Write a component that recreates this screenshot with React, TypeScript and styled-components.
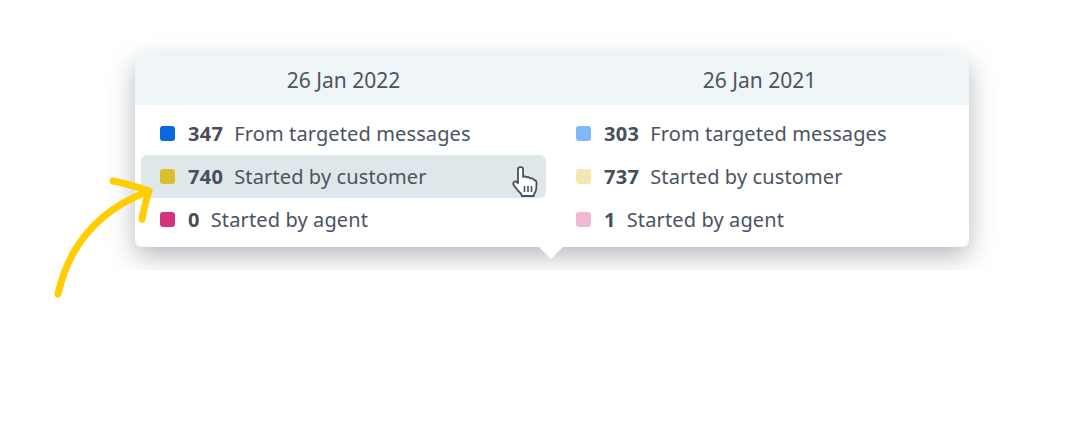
import React from "react";
import styled, { createGlobalStyle } from "styled-components";

const Global = createGlobalStyle`
  html, body { margin: 0; padding: 0; background: #fff; }
  body { font-family: "Noto Sans", "Open Sans", sans-serif; }
`;

const Page = styled.div`
  position: relative;
  width: 1088px;
  height: 423px;
  overflow: hidden;
  background: #fff;
`;

const ShadowClip = styled.div`
  height: 270px;
  padding: 55px 0 0 135px;
  box-sizing: border-box;
  overflow: hidden;
`;

const Card = styled.div`
  position: relative;
  width: 834px;
  height: 192px;
  background: #fff;
  border-radius: 7px;
  box-shadow: 0 9px 26px rgba(60, 72, 84, 0.38);
`;

const HeaderRow = styled.div`
  display: grid;
  grid-template-columns: 405px 405px;
  column-gap: 11px;
  padding: 0 6px;
  height: 50px;
  align-items: center;
  background: #f0f5f7;
  border-radius: 7px 7px 0 0;
`;

const DateLabel = styled.div`
  text-align: center;
  font-size: 21px;
  color: #4a545f;
`;

const Body = styled.div`
  display: grid;
  grid-template-columns: 405px 405px;
  column-gap: 11px;
  padding: 7px 6px 0;
`;

const Column = styled.div`
  display: flex;
  flex-direction: column;
`;

const Row = styled.div<{ $active?: boolean }>`
  display: flex;
  align-items: center;
  height: 43px;
  padding-left: 19px;
  border-radius: 6px;
  background: ${(p) => (p.$active ? "#dfe7ea" : "transparent")};
`;

const Swatch = styled.span<{ $color: string }>`
  width: 15px;
  height: 15px;
  border-radius: 3px;
  background: ${(p) => p.$color};
  margin-right: 13px;
  flex: none;
`;

const Count = styled.b`
  font-size: 20px;
  font-weight: 700;
  letter-spacing: 0.3px;
  color: #464f5a;
  margin-right: 11px;
`;

const Label = styled.span`
  font-size: 20px;
  letter-spacing: 0.12px;
  color: #4a545f;
`;

const Tail = styled.div`
  position: absolute;
  left: 404px;
  top: 192px;
  width: 0;
  height: 0;
  border-left: 12px solid transparent;
  border-right: 12px solid transparent;
  border-top: 12px solid #fff;
`;

const Arrow = styled.svg`
  position: absolute;
  left: 40px;
  top: 160px;
`;

const Cursor = styled.svg`
  position: absolute;
  left: 511px;
  top: 164px;
`;

const data = [
  {
    date: "26 Jan 2022",
    rows: [
      { c: "#0a69de", n: "347", t: "From targeted messages" },
      { c: "#dcbf2e", n: "740", t: "Started by customer", active: true },
      { c: "#d3327f", n: "0", t: "Started by agent" },
    ],
  },
  {
    date: "26 Jan 2021",
    rows: [
      { c: "#80b9fb", n: "303", t: "From targeted messages" },
      { c: "#f3e8b3", n: "737", t: "Started by customer" },
      { c: "#f0b8d3", n: "1", t: "Started by agent" },
    ],
  },
];

export default function App() {
  return (
    <Page>
      <Global />
      <ShadowClip>
        <Card>
          <HeaderRow>
            {data.map((d) => (
              <DateLabel key={d.date}>{d.date}</DateLabel>
            ))}
          </HeaderRow>
          <Body>
            {data.map((d) => (
              <Column key={d.date}>
                {d.rows.map((r) => (
                  <Row key={r.t} $active={r.active}>
                    <Swatch $color={r.c} />
                    <Count>{r.n}</Count>
                    <Label>{r.t}</Label>
                  </Row>
                ))}
              </Column>
            ))}
          </Body>
          <Tail />
        </Card>
      </ShadowClip>
      <Arrow width="120" height="150" viewBox="0 0 120 150" fill="none">
        <path
          d="M18 134 C 27 94, 50 53, 109 31 M73 21 C 85 23, 97 27, 109 31 C 106 40, 104 49, 102 59"
          stroke="#ffcd00"
          strokeWidth="7"
          strokeLinecap="round"
          strokeLinejoin="round"
        />
      </Arrow>
      <Cursor width="28" height="35" viewBox="0 0 28 35" fill="none">
        <path
          d="M7 5 C7 2.4 12 2.4 12 5 L12.2 13 C13.2 12 14.8 12.2 15.5 13.4 C16.8 12.6 18.4 13 19 14.4 C20.4 13.8 22 14.4 22.8 15.8 C24.6 16 25.7 17.6 25.6 19.5 L25.2 25 C25 27 24.2 28.4 23.4 29.4 L22.8 32 L10.8 32 L10.2 30 C7.5 27.4 4.6 24 2.6 21 C1.2 18.8 3.8 16.4 5.8 18 L7 19.2 Z"
          fill="#fff"
          stroke="#48515a"
          strokeWidth="1.8"
          strokeLinejoin="round"
        />
        <path d="M13.5 22V28M17 22V28M20.5 22V28" stroke="#48515a" strokeWidth="1.6" />
      </Cursor>
    </Page>
  );
}
